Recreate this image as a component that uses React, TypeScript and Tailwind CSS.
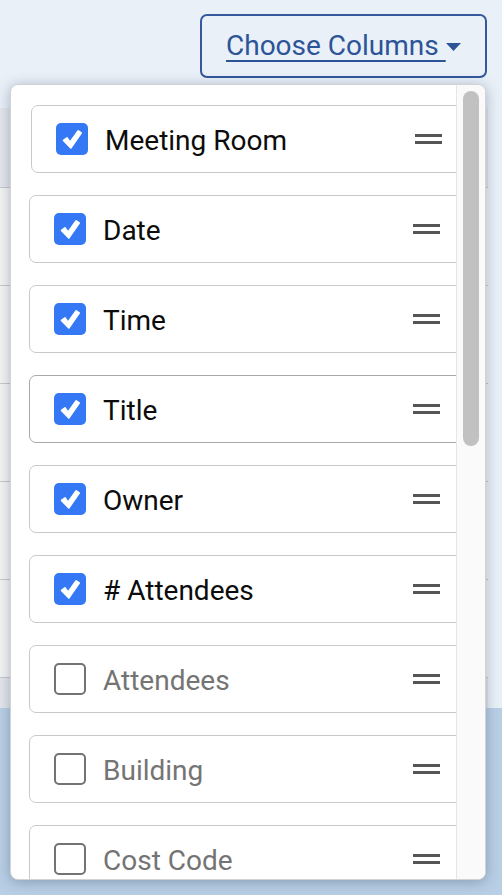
import React from "react";

type Item = { label: string; checked: boolean; hover?: boolean; drag?: boolean };

const items: Item[] = [
  { label: "Meeting Room", checked: true, drag: true },
  { label: "Date", checked: true },
  { label: "Time", checked: true },
  { label: "Title", checked: true, hover: true },
  { label: "Owner", checked: true },
  { label: "# Attendees", checked: true },
  { label: "Attendees", checked: false },
  { label: "Building", checked: false },
  { label: "Cost Code", checked: false },
];

function Check({ checked }: { checked: boolean }) {
  if (checked) {
    return (
      <div className="w-[32px] h-[32px] rounded-[5px] bg-[#3478f6] flex items-center justify-center shrink-0">
        <svg width="32" height="32" viewBox="0 0 32 32">
          <path
            d="M7.5 17.5 L11 14.8 L14 19.2 L22.2 7.8 L25.2 10 L14.8 25 Z"
            fill="white"
            stroke="white"
            strokeWidth="1.6"
            strokeLinejoin="round"
          />
        </svg>
      </div>
    );
  }
  return <div className="w-[32px] h-[32px] rounded-[5px] border-2 border-[#737373] bg-white shrink-0" />;
}

function Handle() {
  return (
    <div className="flex flex-col gap-[4px] w-[27px] shrink-0">
      <div className="h-[3px] bg-[#555555]" />
      <div className="h-[3px] bg-[#555555]" />
    </div>
  );
}

function Card({ item }: { item: Item }) {
  return (
    <div
      className={`h-[68px] w-[445px] shrink-0 rounded-[7px] bg-white flex items-center pl-[24px] border-[1.5px] ${
        item.hover ? "border-[#a9a9a9]" : "border-[#c9c9c9]"
      } ${item.drag ? "ml-[2px]" : ""}`}
    >
      <Check checked={item.checked} />
      <span
        className={`ml-[17px] mt-[3px] text-[28px] leading-none flex-1 ${
          item.checked ? "text-[#0c0c0c]" : "text-[#747474]"
        }`}
        style={{ fontFamily: "Roboto, 'Noto Sans', sans-serif" }}
      >
        {item.label}
      </span>
      <div className="mr-[33px]">
        <Handle />
      </div>
    </div>
  );
}

export default function App() {
  const rows = [0, 1, 2, 3, 4];
  return (
    <div
      className="relative w-[502px] h-[895px] overflow-hidden bg-[#e9f0f8]"
      style={{ fontFamily: "Roboto, 'Noto Sans', sans-serif" }}
    >
      {/* header with button */}
      <div className="h-[108px] flex justify-end items-start pt-[14px] pr-[15px]">
        <button className="h-[64px] w-[287px] rounded-[7px] border-2 border-[#34589b] flex items-center pl-[24px] text-[#2d5497]">
          <span className="text-[28px] leading-none underline underline-offset-[5px] decoration-[2px]">Choose Columns&nbsp;</span>
          <svg width="15" height="8" viewBox="0 0 15 8" className="mt-[2px]">
            <path d="M0 0 L15 0 L7.5 8 Z" fill="#2d5497" />
          </svg>
        </button>
      </div>

      {/* background table */}
      <div className="flex">
        <div className="w-[488px] flex flex-col">
          <div className="h-[80px] bg-[#e4e7ec] border-b border-[#c8c8c8]" />
          {rows.map((r) => (
            <div key={r} className="h-[98px] bg-[#f4f4f4] border-b border-[#c8c8c8]" />
          ))}
          <div className="h-[30px] bg-[#e3e6ec]" />
        </div>
        <div className="flex-1" />
      </div>
      <div className="h-[300px] bg-[#b8cfe5]" />

      {/* dropdown popup */}
      <div className="absolute left-[10px] top-[84px] w-[476px] h-[796px] rounded-[8px] border border-[#d3d3d3] bg-white overflow-hidden flex shadow-[0_2px_14px_rgba(40,60,90,0.35)]">
        <div className="flex-1 overflow-hidden pl-[18px] pt-[20px] flex flex-col gap-[22px]">
          {items.map((it) => (
            <Card key={it.label} item={it} />
          ))}
        </div>
        <div className="w-[29px] h-full bg-[#fafafa] border-l border-[#e6e6e6] pt-[6px] flex justify-center">
          <div className="w-[16px] h-[355px] rounded-full bg-[#c1c1c1]" />
        </div>
      </div>
    </div>
  );
}
